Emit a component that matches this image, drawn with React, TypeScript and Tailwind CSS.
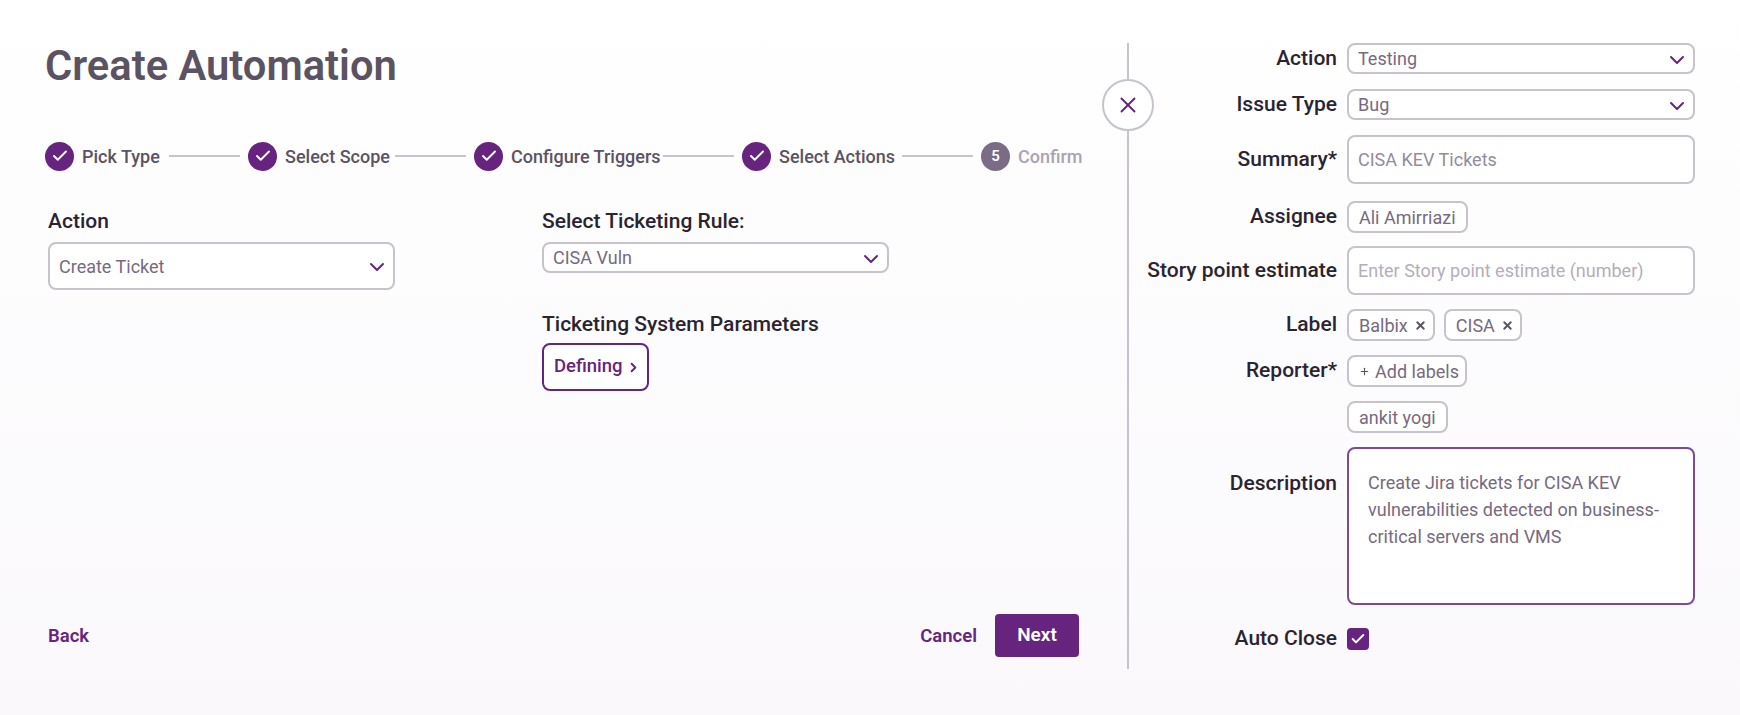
import { Check, ChevronDown, ChevronRight, Plus, X } from "lucide-react";

const steps = [
  { label: "Pick Type", textWidth: "w-[87px]" },
  { label: "Select Scope", textWidth: "w-[110px]" },
  { label: "Configure Triggers", textWidth: "w-[152px]" },
  { label: "Select Actions", textWidth: "w-[123px]" },
];

function StepDot() {
  return (
    <span className="flex h-[29px] w-[29px] shrink-0 items-center justify-center rounded-full bg-[#66247f]">
      <Check className="h-[18px] w-[18px] text-white" strokeWidth={2.5} />
    </span>
  );
}

function Stepper() {
  return (
    <div className="flex h-[30px] items-center">
      {steps.map((s) => (
        <div key={s.label} className="flex items-center">
          <StepDot />
          <span className={`ml-[8px] text-[18px] font-medium whitespace-nowrap text-[#5b5361] ${s.textWidth}`}>
            {s.label}
          </span>
          <span className="mr-[8px] h-[2px] w-[71px] bg-[#c8c2cc]" />
        </div>
      ))}
      <span className="flex h-[29px] w-[29px] shrink-0 items-center justify-center rounded-full bg-[#7a6c84] text-[15px] font-semibold text-white">
        5
      </span>
      <span className="ml-[8px] text-[18px] font-medium text-[#aaa3b0]">Confirm</span>
    </div>
  );
}

function Select({ value, className }: { value: string; className: string }) {
  return (
    <div
      className={`flex items-center justify-between rounded-[8px] border-2 border-[#c8c2cc] bg-white pr-[4px] pl-[9px] text-[18px] text-[#776a80] ${className}`}
    >
      <span>{value}</span>
      <ChevronDown className="mt-[2px] h-[24px] w-[24px] text-[#66247f]" strokeWidth={2} />
    </div>
  );
}

function Chip({ children, className = "" }: { children: React.ReactNode; className?: string }) {
  return (
    <div className={`flex h-[32px] items-center rounded-[8px] border-2 border-[#c8c2cc] bg-white pl-[10px] text-[18px] text-[#776a80] ${className}`}>
      {children}
    </div>
  );
}

function Row({ label, className, children }: { label?: string; className: string; children: React.ReactNode }) {
  return (
    <div className={`flex items-center gap-[10px] ${className}`}>
      <div className="w-[214px] text-right text-[21px] font-medium whitespace-nowrap text-[#2a2430]">{label}</div>
      {children}
    </div>
  );
}

function RightPanel() {
  return (
    <div className="flex flex-col">
      <Row label="Action" className="h-[31px]">
        <Select value="Testing" className="h-[31px] w-[348px]" />
      </Row>
      <Row label="Issue Type" className="mt-[15px] h-[31px]">
        <Select value="Bug" className="h-[31px] w-[348px]" />
      </Row>
      <Row label="Summary*" className="mt-[15px] h-[49px]">
        <div className="flex h-[49px] w-[348px] items-center rounded-[8px] border-2 border-[#c8c2cc] bg-white px-[9px] text-[18px] text-[#958b9c]">
          CISA KEV Tickets
        </div>
      </Row>
      <Row label="Assignee" className="mt-[17px] h-[32px]">
        <Chip className="pr-[10px]">Ali Amirriazi</Chip>
      </Row>
      <Row label="Story point estimate" className="mt-[13px] h-[49px]">
        <div className="flex h-[49px] w-[348px] items-center rounded-[8px] border-2 border-[#c8c2cc] bg-white px-[9px] text-[18px] text-[#b5aeba]">
          Enter Story point estimate (number)
        </div>
      </Row>
      <Row label="Label" className="mt-[14px] h-[32px]">
        <div className="flex gap-[9px]">
          <Chip className="gap-[6px] pr-[6px]">
            Balbix <X className="h-[13px] w-[13px] text-[#5b5361]" strokeWidth={3.5} />
          </Chip>
          <Chip className="gap-[6px] pr-[6px]">
            CISA <X className="h-[13px] w-[13px] text-[#5b5361]" strokeWidth={3.5} />
          </Chip>
        </div>
      </Row>
      <Row label="Reporter*" className="mt-[14px] h-[32px]">
        <Chip className="gap-[5px] pr-[6px]">
          <Plus className="h-[11px] w-[11px] text-[#5b5361]" strokeWidth={2.5} /> Add labels
        </Chip>
      </Row>
      <Row className="mt-[14px] h-[32px]">
        <Chip className="pr-[10px]">ankit yogi</Chip>
      </Row>
      <div className="mt-[14px] flex gap-[10px]">
        <div className="w-[214px] pt-[21px] text-right text-[21px] font-medium text-[#2a2430]">Description</div>
        <div className="h-[158px] w-[348px] rounded-[8px] border-2 border-[#7e4a97] bg-white px-[19px] pt-[20px] text-[18px] leading-[27px] text-[#776a80]">
          Create Jira tickets for CISA KEV vulnerabilities detected on business-critical servers and VMS
        </div>
      </div>
      <Row label="Auto Close" className="mt-[23px] h-[22px]">
        <span className="flex h-[22px] w-[22px] items-center justify-center rounded-[4px] bg-[#66247f]">
          <Check className="h-[16px] w-[16px] text-white" strokeWidth={3} />
        </span>
      </Row>
    </div>
  );
}

export default function App() {
  return (
    <div
      className="flex h-[715px] w-[1740px] bg-gradient-to-b from-white to-[#faf8fb] pt-[43px] text-[#2a2430]"
      style={{ fontFamily: '"Roboto", "Liberation Sans", sans-serif' }}
    >
      <div className="flex h-[625px] w-[1127px] shrink-0 flex-col pr-[48px] pl-[45px]">
        <h1 className="text-[41.7px] leading-[46px] font-semibold text-[#5b5361]">Create Automation</h1>
        <div className="mt-[52px]">
          <Stepper />
        </div>
        <div className="mt-[37px] ml-[3px] flex">
          <div className="w-[494px]">
            <div className="text-[21px] leading-[26px] font-medium">Action</div>
            <Select value="Create Ticket" className="mt-[8px] h-[48px] w-[347px]" />
          </div>
          <div>
            <div className="text-[21px] leading-[26px] font-medium">Select Ticketing Rule:</div>
            <Select value="CISA Vuln" className="mt-[8px] h-[31px] w-[347px]" />
            <div className="mt-[38px] text-[21px] leading-[26px] font-medium">Ticketing System Parameters</div>
            <button
              type="button"
              className="mt-[6px] flex h-[48px] w-[107px] items-center gap-[3px] rounded-[8px] border-2 border-[#66247f] bg-white pl-[10px] text-[18.5px] font-medium text-[#66247f]"
            >
              Defining <ChevronRight className="h-[15px] w-[15px]" strokeWidth={3} />
            </button>
          </div>
        </div>
        <div className="mt-auto ml-[3px] flex items-center justify-between pb-[11px]">
          <button type="button" className="pt-[2px] text-[18.5px] font-semibold text-[#66247f]">
            Back
          </button>
          <div className="flex items-center gap-[18px]">
            <button type="button" className="pt-[2px] text-[18.5px] font-semibold text-[#66247f]">
              Cancel
            </button>
            <button type="button" className="h-[43px] w-[84px] rounded-[4px] bg-[#66247f] text-[19px] font-semibold text-white">
              Next
            </button>
          </div>
        </div>
      </div>
      <div className="relative h-[626px] w-[2px] shrink-0 bg-[#c8c2cc]">
        <button
          type="button"
          className="absolute top-[36px] left-[-25px] flex h-[52px] w-[52px] items-center justify-center rounded-full border-2 border-[#c8c2cc] bg-white"
        >
          <X className="h-[26px] w-[26px] text-[#66247f]" strokeWidth={1.75} />
        </button>
      </div>
      <div className="ml-[-6px]">
        <RightPanel />
      </div>
    </div>
  );
}
